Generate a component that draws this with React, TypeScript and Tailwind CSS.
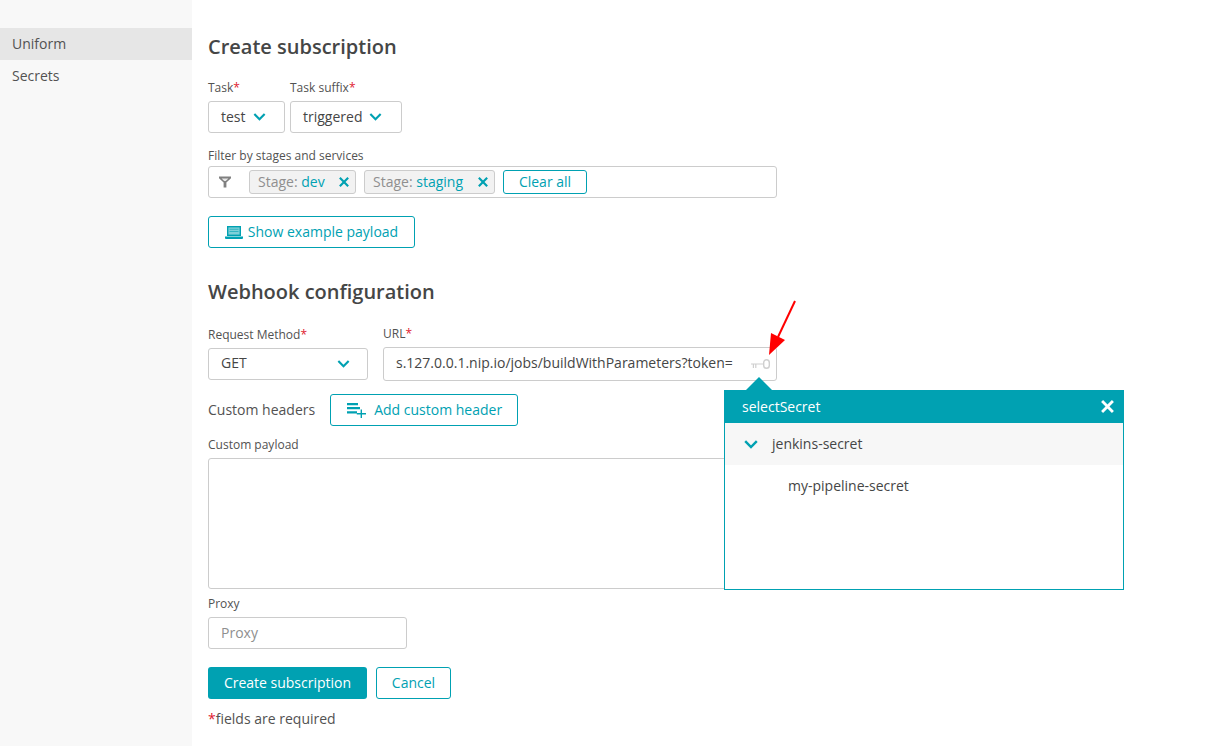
const teal = 'text-[#00a1b2]';

function Label({ text, required }: { text: string; required?: boolean }) {
  return (
    <div className="h-4 text-xs leading-4 text-[#525252]">
      {text}
      {required && <span className="text-[#e0202f]">*</span>}
    </div>
  );
}

function Chevron({ large }: { large?: boolean }) {
  return (
    <svg width={large ? 14 : 13} height={large ? 9 : 8} viewBox="0 0 14 9" className={teal}>
      <path d="M1.2 1.2L7 7L12.8 1.2" fill="none" stroke="currentColor" strokeWidth="2.4" />
    </svg>
  );
}

function Cross({ size }: { size: number }) {
  return (
    <svg width={size} height={size} viewBox="0 0 12 12">
      <path d="M1 1L11 11M11 1L1 11" fill="none" stroke="currentColor" strokeWidth="2.6" />
    </svg>
  );
}

function Select({ value, width }: { value: string; width: string }) {
  return (
    <div className={`flex h-8 items-center gap-[7px] rounded-[3px] border border-[#cccccc] bg-white pl-3 text-sm text-[#454646] ${width}`}>
      <span>{value}</span>
      <Chevron />
    </div>
  );
}

function Chip({ value, width }: { value: string; width: string }) {
  return (
    <div className={`flex h-6 items-center justify-between rounded-[3px] border border-[#cccccc] bg-[#f2f2f2] pl-2 pr-1.5 text-sm ${width}`}>
      <span className="text-[#8f8f8f]">
        Stage: <span className={teal}>{value}</span>
      </span>
      <span className={teal}>
        <Cross size={10} />
      </span>
    </div>
  );
}

function FilterIcon() {
  return (
    <svg width="12" height="12" viewBox="0 0 12 12" className="text-[#808080]">
      <path d="M0 0.5h12v1.8L7.4 6.6V11.5H4.6V6.6L0 2.3z" fill="currentColor" />
      <path d="M2.6 2.5h6.8L6.8 5H5.2z" fill="#e8e8e8" />
    </svg>
  );
}

function LaptopIcon() {
  return (
    <svg width="18" height="13" viewBox="0 0 18 13" className={teal}>
      <path d="M2 0h14v10H2z" fill="currentColor" />
      <path d="M3.4 1.4h11.2v7.2H3.4z" fill="#7fd0d8" />
      <path d="M4.5 2.8h9v1h-9zM4.5 5h9v1h-9z" fill="currentColor" opacity="0.6" />
      <path d="M0 10.6h18V12a1 1 0 0 1-1 1H1a1 1 0 0 1-1-1z" fill="currentColor" />
    </svg>
  );
}

function HeaderIcon() {
  return (
    <svg width="20" height="15" viewBox="0 0 20 15" className={teal}>
      <path d="M0 0h11v2.2H0zM0 4.1h13v2.2H0zM0 8.2h10v2.4H0z" fill="currentColor" />
      <path d="M13.6 6.6h1.4v3.4h4v1.4h-4V15h-1.4v-3.6H9.8V10h3.8z" fill="currentColor" />
    </svg>
  );
}

function KeyIcon() {
  return (
    <svg width="19" height="10" viewBox="0 0 19 10" className="text-[#cfcfcf]">
      <rect x="12.7" y="0.7" width="5.6" height="8.6" rx="2.8" fill="none" stroke="currentColor" strokeWidth="1.4" />
      <path d="M0 4.4h12.5v1.2H5.4V9H4.2V5.6H3V9H1.8V5.6H0z" fill="currentColor" />
    </svg>
  );
}

export default function App() {
  return (
    <div className="flex h-[746px] w-[1209px] overflow-hidden bg-white font-['Open_Sans',sans-serif] text-[#454646]">
      {/* Sidebar */}
      <div className="w-48 shrink-0 bg-[#f8f8f8] pt-7 text-sm text-[#525252]">
        <div className="flex h-8 items-center bg-[#e6e6e6] pl-3">Uniform</div>
        <div className="flex h-8 items-center pl-3">Secrets</div>
      </div>

      {/* Form */}
      <div className="relative flex-1 pl-4 pt-[33px]">
        <h1 className="h-7 text-xl leading-7 font-semibold text-[#454646]">Create subscription</h1>

        <div className="mt-[19px] flex gap-[5px]">
          <div>
            <Label text="Task" required />
            <div className="mt-[5px]">
              <Select value="test" width="w-[77px]" />
            </div>
          </div>
          <div>
            <Label text="Task suffix" required />
            <div className="mt-[5px]">
              <Select value="triggered" width="w-[112px]" />
            </div>
          </div>
        </div>

        <div className="mt-[15px]">
          <Label text="Filter by stages and services" />
        </div>
        <div className="mt-[2px] flex h-8 w-[569px] items-center rounded-[3px] border border-[#cccccc] bg-white pl-[10px]">
          <FilterIcon />
          <div className="ml-[18px] flex items-center gap-2">
            <Chip value="dev" width="w-[107px]" />
            <Chip value="staging" width="w-[131px]" />
            <div className={`flex h-6 w-[84px] items-center justify-center rounded-[3px] border border-[#00a1b2] text-sm ${teal}`}>
              Clear all
            </div>
          </div>
        </div>

        <button className={`mt-[18px] flex h-8 w-[207px] items-center justify-center gap-[5px] rounded-[3px] border border-[#00a1b2] text-sm ${teal}`}>
          <LaptopIcon />
          Show example payload
        </button>

        <h2 className="mt-[30px] h-7 text-xl leading-7 font-semibold text-[#454646]">Webhook configuration</h2>

        <div className="mt-5 flex gap-[15px]">
          <div>
            <div className="pt-px">
              <Label text="Request Method" required />
            </div>
            <div className="mt-[5px] flex h-8 w-40 items-center justify-between rounded-[3px] border border-[#cccccc] pl-3 pr-[17px] text-sm text-[#454646]">
              <span className="pb-0.5">GET</span>
              <Chevron />
            </div>
          </div>
          <div>
            <Label text="URL" required />
            <div className="mt-[5px] flex h-[34px] w-[394px] items-center justify-between overflow-hidden rounded-[3px] border border-[#cccccc] pl-3 pr-1.5 text-sm text-[#454646]">
              <span className="whitespace-nowrap pb-0.5">s.127.0.0.1.nip.io/jobs/buildWithParameters?token=</span>
              <KeyIcon />
            </div>
          </div>
        </div>

        <div className="mt-[13px] flex items-center gap-[15px]">
          <span className="text-sm text-[#525252]">Custom headers</span>
          <button className={`flex h-8 w-[188px] items-center gap-[7px] rounded-[3px] border border-[#00a1b2] pl-4 text-sm ${teal}`}>
            <HeaderIcon />
            Add custom header
          </button>
        </div>

        <div className="mt-[11px]">
          <Label text="Custom payload" />
        </div>
        <div className="mt-[5px] h-[131px] w-[569px] rounded-[3px] border border-[#cccccc]" />

        <div className="mt-[7px]">
          <Label text="Proxy" />
        </div>
        <div className="mt-[5px] flex h-8 w-[199px] items-center rounded-[3px] border border-[#cccccc] pl-3 text-sm text-[#8f8f8f]">Proxy</div>

        <div className="mt-[18px] flex gap-[9px]">
          <button className="h-8 w-[159px] rounded-[3px] bg-[#00a1b2] text-sm text-white">Create subscription</button>
          <button className={`h-8 w-[75px] rounded-[3px] border border-[#00a1b2] text-sm ${teal}`}>Cancel</button>
        </div>

        <div className="mt-2.5 text-sm text-[#525252]">
          <span className="text-[#e0202f]">*</span>fields are required
        </div>

        {/* Secret selection overlay */}
        <div className="absolute left-[532px] top-[390px] h-[200px] w-[400px] border border-[#00a1b2] bg-white">
          <div className="absolute -top-[14px] left-[20px] h-0 w-0 border-x-[14px] border-b-[14px] border-x-transparent border-b-[#00a1b2]" />
          <div className="-mx-px -mt-px flex h-[33px] items-center justify-between bg-[#00a1b2] pl-[18px] pr-[10px] text-sm text-white">
            selectSecret
            <Cross size={13} />
          </div>
          <div className="flex h-[42px] items-center bg-[#f7f7f7] pl-[19px] text-sm text-[#454646]">
            <Chevron large />
            <span className="ml-3.5">jenkins-secret</span>
          </div>
          <div className="flex h-[42px] items-center pl-[63px] text-sm text-[#454646]">my-pipeline-secret</div>
        </div>

        {/* Red annotation arrow */}
        <svg width="40" height="64" viewBox="0 0 40 64" className="absolute left-[566px] top-[296px]">
          <path d="M37 5L20 41" stroke="#ff0000" strokeWidth="2" fill="none" />
          <path d="M11 59L13 37L27 44z" fill="#ff0000" />
        </svg>
      </div>
    </div>
  );
}
